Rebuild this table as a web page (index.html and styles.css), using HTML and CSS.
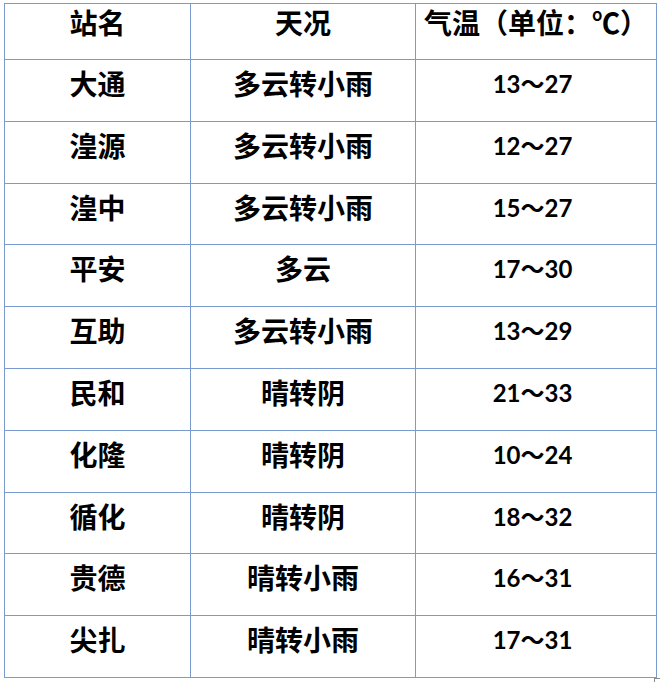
FILE: index.html
```html
<!DOCTYPE html>
<html lang="zh-CN">
<head>
<meta charset="utf-8">
<link rel="stylesheet" href="styles.css">
</head>
<body>
<div class="page">
<table class="weather">
  <colgroup>
    <col class="c1"><col class="c2"><col class="c3">
  </colgroup>
  <tr class="head"><td>站名</td><td>天况</td><td class="temp-head">气温（单位：℃）</td></tr>
  <tr><td>大通</td><td>多云转小雨</td><td class="num">13～27</td></tr>
  <tr><td>湟源</td><td>多云转小雨</td><td class="num">12～27</td></tr>
  <tr><td>湟中</td><td>多云转小雨</td><td class="num">15～27</td></tr>
  <tr><td>平安</td><td>多云</td><td class="num">17～30</td></tr>
  <tr><td>互助</td><td>多云转小雨</td><td class="num">13～29</td></tr>
  <tr><td>民和</td><td>晴转阴</td><td class="num">21～33</td></tr>
  <tr><td>化隆</td><td>晴转阴</td><td class="num">10～24</td></tr>
  <tr><td>循化</td><td>晴转阴</td><td class="num">18～32</td></tr>
  <tr><td>贵德</td><td>晴转小雨</td><td class="num">16～31</td></tr>
  <tr><td>尖扎</td><td>晴转小雨</td><td class="num">17～31</td></tr>
</table>
<div class="endmark"></div>
</div>
</body>
</html>
```
FILE: styles.css
```css
html, body {
  margin: 0;
  padding: 0;
  background: #ffffff;
}
.page {
  padding: 3px 0 0 4px;
}
.weather {
  border-collapse: collapse;
  table-layout: fixed;
  width: 652px;
  font-family: "Noto Sans CJK SC", sans-serif;
  font-weight: 700;
  color: #000;
}
.c1 { width: 186px; }
.c2 { width: 225px; }
.c3 { width: 241px; }
.weather td {
  border: 1px solid #7b9bd0;
  height: 61.8px;
  box-sizing: border-box;
  padding: 9px 0 0 0;
  vertical-align: top;
  text-align: center;
  font-size: 28px;
  line-height: 28px;
  white-space: nowrap;
}
.weather .head td {
  height: 56px;
  padding-top: 4px;
}
.weather td.temp-head {
  padding-right: 0;
}
.weather td.num {
  font-family: Lato, "Noto Sans CJK SC", sans-serif;
  font-size: 24px;
  padding-top: 10px;
  padding-right: 7px;
}
.endmark {
  width: 5px;
  height: 6px;
  margin: 0 0 0 650px;
  border: 1px solid #8a8a8a;
  border-bottom: none;
}
```
